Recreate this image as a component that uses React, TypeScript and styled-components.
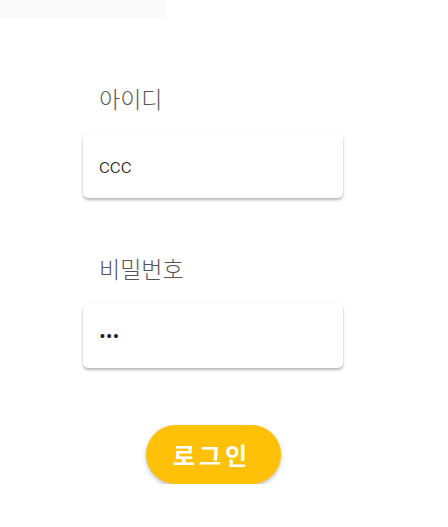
import React from "react";
import styled, { createGlobalStyle } from "styled-components";

const Global = createGlobalStyle`
  html, body { margin: 0; padding: 0; background: #ffffff; }
  body { font-family: "Noto Sans CJK KR", "Noto Sans", Roboto, sans-serif; }
`;

const TopStrip = styled.div`
  width: 166px;
  height: 18px;
  background: #fafafa;
`;

const Form = styled.form`
  display: flex;
  flex-direction: column;
  width: 260px;
  margin: 64px 0 0 83px;
`;

const Field = styled.div`
  display: flex;
  flex-direction: column;
  gap: 20px;
  margin-bottom: 54px;
`;

const Label = styled.label`
  padding-left: 16px;
  font-size: 23px;
  line-height: 32px;
  font-weight: 300;
  color: #555555;
`;

const Input = styled.input`
  box-sizing: border-box;
  width: 260px;
  height: 64px;
  padding: 0 16px;
  border: none;
  border-radius: 5px;
  background: #ffffff;
  box-shadow: 0 2px 3px rgba(0, 0, 0, 0.28), 0 0 2px rgba(0, 0, 0, 0.06);
  font-family: Roboto, "Noto Sans CJK KR", sans-serif;
  font-size: 21px;
  font-weight: 300;
  color: #222222;
  outline: none;
`;

const ButtonRow = styled.div`
  display: flex;
  justify-content: center;
  margin-top: 3px;
`;

const LoginButton = styled.button`
  width: 135px;
  height: 59px;
  border: none;
  border-radius: 30px;
  background: #ffc107;
  color: #ffffff;
  font-family: "Noto Sans CJK KR", sans-serif;
  font-size: 24px;
  font-weight: 700;
  letter-spacing: 4px;
  padding-left: 4px;
  box-shadow: 0 2px 4px rgba(0, 0, 0, 0.25);
  cursor: pointer;
`;

export default function App() {
  return (
    <>
      <Global />
      <TopStrip />
      <Form onSubmit={(e) => e.preventDefault()}>
        <Field>
          <Label>아이디</Label>
          <Input type="text" defaultValue="ccc" />
        </Field>
        <Field>
          <Label>비밀번호</Label>
          <Input type="password" defaultValue="ccc" />
        </Field>
        <ButtonRow>
          <LoginButton type="submit">로그인</LoginButton>
        </ButtonRow>
      </Form>
    </>
  );
}
